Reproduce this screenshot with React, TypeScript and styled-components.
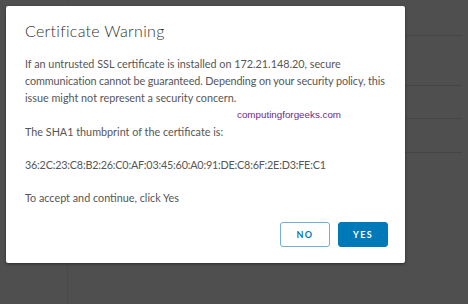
import styled, { createGlobalStyle } from "styled-components";

const GlobalStyle = createGlobalStyle`
  html, body {
    margin: 0;
    padding: 0;
    background: #4f4f4f;
  }
  body {
    width: 468px;
    height: 304px;
    overflow: hidden;
    font-family: Lato, "Open Sans", sans-serif;
  }
`;

const rows = [35, 49, 32, 33];

function App() {
  return (
    <>
      <GlobalStyle />
      <Page>
        <SideColumn />
        <MainArea>
          <RightRows>
            {rows.map((h, i) => (
              <Row key={i} style={{ height: h }} />
            ))}
          </RightRows>
        </MainArea>

        <Modal>
          <Title>Certificate Warning</Title>
          <Body>
            <Paragraph tight>
              If an untrusted SSL certificate is installed on 172.21.148.20, secure
              <br />
              <Condensed>
                communication cannot be guaranteed. Depending on your security policy, this
              </Condensed>
              <br />
              issue might not represent a security concern.
            </Paragraph>
            <Watermark>computingforgeeks.com</Watermark>
            <Paragraph>The SHA1 thumbprint of the certificate is:</Paragraph>
            <Paragraph>
              <Condensed wide>
                36:2C:23:C8:B2:26:C0:AF:03:45:60:A0:91:DE:C8:6F:2E:D3:FE:C1
              </Condensed>
            </Paragraph>
            <Paragraph>To accept and continue, click Yes</Paragraph>
          </Body>
          <Footer>
            <Button>NO</Button>
            <Button primary>YES</Button>
          </Footer>
        </Modal>
      </Page>
    </>
  );
}

export default App;

const Page = styled.div`
  position: relative;
  width: 468px;
  height: 304px;
  display: flex;
`;

// faint page behind the overlay
const SideColumn = styled.div`
  width: 67px;
  border-right: 1px solid #4a4a4a;
`;

const MainArea = styled.div`
  flex: 1;
  display: flex;
  justify-content: flex-end;
  padding-right: 6px;
`;

const RightRows = styled.div`
  width: 60px;
  display: flex;
  flex-direction: column;
`;

const Row = styled.div`
  border-bottom: 1px solid #454545;
`;

// dialog
const Modal = styled.div`
  position: absolute;
  top: 6px;
  left: 6px;
  width: 399px;
  height: 257px;
  box-sizing: border-box;
  background: #ffffff;
  border-radius: 2px;
  box-shadow: 0 1px 3px rgba(0, 0, 0, 0.45);
  padding: 14px 17px 16px 19px;
  display: flex;
  flex-direction: column;
`;

const Title = styled.h3`
  margin: 0;
  font-size: 16px;
  font-weight: 300;
  line-height: 22px;
  color: #313131;
  letter-spacing: 0.3px;
`;

const Body = styled.div`
  margin-top: 13px;
  display: flex;
  flex-direction: column;
`;

const Paragraph = styled.p<{ tight?: boolean }>`
  margin: 0 0 ${(p) => (p.tight ? "0" : "16px")};
  font-size: 10.8px;
  line-height: 17px;
  color: #565656;
  white-space: nowrap;
`;

const Condensed = styled.span<{ wide?: boolean }>`
  letter-spacing: ${(p) => (p.wide ? "-0.2px" : "-0.1px")};
`;

const Watermark = styled.div`
  padding-left: 212px;
  font-family: "Liberation Sans", Arial, sans-serif;
  font-size: 9.8px;
  line-height: 17px;
  color: #6e2a86;
`;

const Footer = styled.div`
  margin-top: auto;
  display: flex;
  justify-content: flex-end;
  gap: 8px;
`;

const Button = styled.button<{ primary?: boolean }>`
  width: 50px;
  height: 25px;
  box-sizing: border-box;
  border-radius: 3px;
  border: 1px solid ${(p) => (p.primary ? "#0079b8" : "#6fb0d6")};
  background: ${(p) => (p.primary ? "#0079b8" : "#ffffff")};
  color: ${(p) => (p.primary ? "#ffffff" : "#0079b8")};
  font-family: Lato, "Open Sans", sans-serif;
  font-size: 9px;
  font-weight: 700;
  letter-spacing: 1.4px;
  padding: 0;
  cursor: pointer;
`;
